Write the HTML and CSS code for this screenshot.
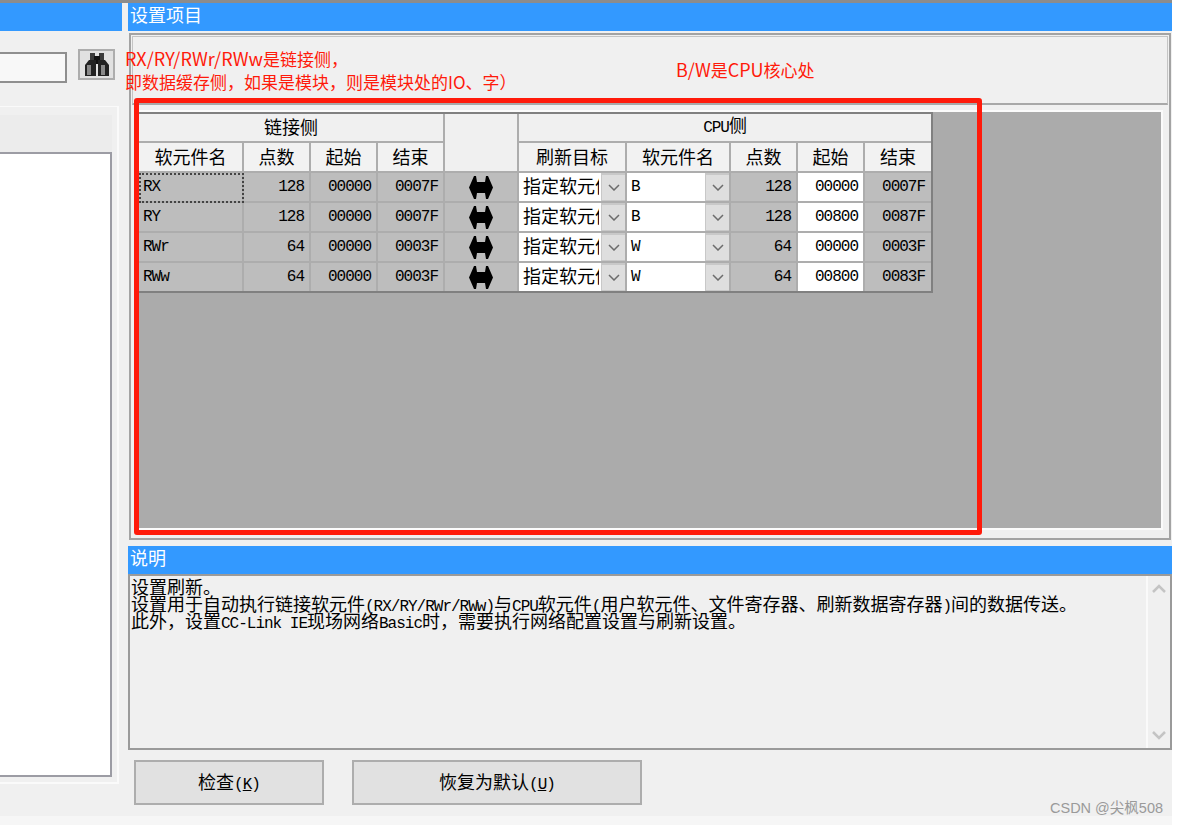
FILE: index.html
```html
<!DOCTYPE html>
<html lang="zh-CN">
<head>
  <meta charset="UTF-8" />
  <title>设置项目</title>
  <link rel="stylesheet" href="styles.css">
</head>
<body>
  <div class="window">
    <div class="main">
      <div class="left">
        <div class="title-bar left-title"></div>
        <div class="search-row">
          <div class="search-input"></div>
          <button class="search-btn" type="button">
            <svg width="26" height="25" viewBox="0 0 26 25">
              <rect x="6" y="1" width="5" height="8" fill="#3a3a3a" />
              <rect x="15" y="1" width="5" height="8" fill="#3a3a3a" />
              <rect x="10" y="4" width="6" height="8" fill="#111" />
              <path d="M5 8h7v16H1V13z" fill="#222" />
              <path d="M14 8h7l4 5v11H14z" fill="#222" />
              <rect x="3" y="13" width="4" height="10" fill="#8a8a8a" />
              <rect x="17" y="13" width="4" height="10" fill="#8a8a8a" />
            </svg>
          </button>
        </div>
        <div class="tree-frame">
          <div class="tree-head"></div>
          <div class="tree-list"></div>
        </div>
      </div>

      <div class="right">
        <div class="title-bar">设置项目</div>
        <div class="settings">
          <div class="settings-top"></div>
          <div class="settings-body">
            <div class="grid-area">
              <table class="grid">
                <colgroup>
                  <col class="c-name"><col class="c-num"><col class="c-num"><col class="c-num">
                  <col class="c-arrow"><col class="c-target"><col class="c-device">
                  <col class="c-num"><col class="c-num"><col class="c-last">
                </colgroup>
                <thead>
                  <tr class="top">
                    <th colspan="4">链接侧</th>
                    <th rowspan="2"></th>
                    <th colspan="5"><span class="lat">CPU</span>侧</th>
                  </tr>
                  <tr class="sub">
                    <th>软元件名</th><th>点数</th><th>起始</th><th>结束</th>
                    <th>刷新目标</th><th>软元件名</th><th>点数</th><th>起始</th><th>结束</th>
                  </tr>
                </thead>
                <tbody>
                  <tr>
                    <td class="lat name focus">RX</td><td class="lat num">128</td><td class="lat num">00000</td><td class="lat num">0007F</td>
                    <td class="arrow"><svg width="24" height="23" viewBox="0 0 24 23"><path d="M0 11.5 5 0H7L8 6H16L17 0H19L24 11.5 19 23H17L16 17H8L7 23H5Z" /></svg></td>
                    <td class="combo-cell"><div class="combo"><span class="combo-text">指定软元件</span><span class="combo-btn"><svg width="12" height="7" viewBox="0 0 12 7"><path d="M1 1 6 6 11 1" /></svg></span></div></td>
                    <td class="combo-cell"><div class="combo"><span class="combo-text lat">B</span><span class="combo-btn"><svg width="12" height="7" viewBox="0 0 12 7"><path d="M1 1 6 6 11 1" /></svg></span></div></td>
                    <td class="lat num">128</td><td class="lat num edit">00000</td><td class="lat num">0007F</td>
                  </tr>
                  <tr>
                    <td class="lat name">RY</td><td class="lat num">128</td><td class="lat num">00000</td><td class="lat num">0007F</td>
                    <td class="arrow"><svg width="24" height="23" viewBox="0 0 24 23"><path d="M0 11.5 5 0H7L8 6H16L17 0H19L24 11.5 19 23H17L16 17H8L7 23H5Z" /></svg></td>
                    <td class="combo-cell"><div class="combo"><span class="combo-text">指定软元件</span><span class="combo-btn"><svg width="12" height="7" viewBox="0 0 12 7"><path d="M1 1 6 6 11 1" /></svg></span></div></td>
                    <td class="combo-cell"><div class="combo"><span class="combo-text lat">B</span><span class="combo-btn"><svg width="12" height="7" viewBox="0 0 12 7"><path d="M1 1 6 6 11 1" /></svg></span></div></td>
                    <td class="lat num">128</td><td class="lat num edit">00800</td><td class="lat num">0087F</td>
                  </tr>
                  <tr>
                    <td class="lat name">RWr</td><td class="lat num">64</td><td class="lat num">00000</td><td class="lat num">0003F</td>
                    <td class="arrow"><svg width="24" height="23" viewBox="0 0 24 23"><path d="M0 11.5 5 0H7L8 6H16L17 0H19L24 11.5 19 23H17L16 17H8L7 23H5Z" /></svg></td>
                    <td class="combo-cell"><div class="combo"><span class="combo-text">指定软元件</span><span class="combo-btn"><svg width="12" height="7" viewBox="0 0 12 7"><path d="M1 1 6 6 11 1" /></svg></span></div></td>
                    <td class="combo-cell"><div class="combo"><span class="combo-text lat">W</span><span class="combo-btn"><svg width="12" height="7" viewBox="0 0 12 7"><path d="M1 1 6 6 11 1" /></svg></span></div></td>
                    <td class="lat num">64</td><td class="lat num edit">00000</td><td class="lat num">0003F</td>
                  </tr>
                  <tr>
                    <td class="lat name">RWw</td><td class="lat num">64</td><td class="lat num">00000</td><td class="lat num">0003F</td>
                    <td class="arrow"><svg width="24" height="23" viewBox="0 0 24 23"><path d="M0 11.5 5 0H7L8 6H16L17 0H19L24 11.5 19 23H17L16 17H8L7 23H5Z" /></svg></td>
                    <td class="combo-cell"><div class="combo"><span class="combo-text">指定软元件</span><span class="combo-btn"><svg width="12" height="7" viewBox="0 0 12 7"><path d="M1 1 6 6 11 1" /></svg></span></div></td>
                    <td class="combo-cell"><div class="combo"><span class="combo-text lat">W</span><span class="combo-btn"><svg width="12" height="7" viewBox="0 0 12 7"><path d="M1 1 6 6 11 1" /></svg></span></div></td>
                    <td class="lat num">64</td><td class="lat num edit">00800</td><td class="lat num">0083F</td>
                  </tr>
                </tbody>
              </table>
            </div>
          </div>
        </div>

        <div class="title-bar desc-title">说明</div>
        <div class="desc">
          <div class="desc-text">
            <p>设置刷新。</p>
            <p>设置用于自动执行链接软元件<span class="lat">(RX/RY/RWr/RWw)</span>与<span class="lat">CPU</span>软元件<span class="lat">(</span>用户软元件、文件寄存器、刷新数据寄存器<span class="lat">)</span>间的数据传送。</p>
            <p>此外，设置<span class="lat">CC-Link IE</span>现场网络<span class="lat">Basic</span>时，需要执行网络配置设置与刷新设置。</p>
          </div>
          <div class="desc-scroll">
            <svg width="14" height="9" viewBox="0 0 14 9"><path d="M1 8 7 2 13 8" /></svg>
            <svg width="14" height="9" viewBox="0 0 14 9"><path d="M1 1 7 7 13 1" /></svg>
          </div>
        </div>

        <div class="actions">
          <button class="btn btn-check" type="button">检查<span class="lat">(<u>K</u>)</span></button>
          <button class="btn btn-reset" type="button">恢复为默认<span class="lat">(<u>U</u>)</span></button>
        </div>
      </div>
    </div>
    <div class="bottom-strip"></div>

    <div class="note-box"></div>
    <div class="note note-link"><span class="note-lat">RX/RY/RWr/RWw</span>是链接侧，<br>即数据缓存侧，如果是模块，则是模块处的IO、字）</div>
    <div class="note note-cpu"><span class="note-lat">B/W</span>是<span class="note-lat">CPU</span>核心处</div>
    <div class="watermark">CSDN @尖枫508</div>
  </div>
</body>
</html>
```

FILE: styles.css
```css
* {
  box-sizing: border-box;
}

body {
  margin: 0;
  background: white;
  font-family: "Noto Sans CJK SC", "Liberation Sans", sans-serif;
  font-size: 18px;
  color: black;
  overflow: hidden;
}

.window {
  position: relative;
  width: 1172px;
  height: 825px;
  background: #f0f0f0;
  border-top: 3px solid #8c8c8c;
  display: flex;
  flex-direction: column;
}

.main {
  display: flex;
  height: 813px;
}

.bottom-strip {
  height: 9px;
  background: #f6f6f6;
}

.lat {
  font-family: "Liberation Mono", monospace;
  font-size: 16px;
  letter-spacing: -1px;
}

.title-bar {
  height: 28px;
  background: #3399ff;
  color: white;
  font-size: 18px;
  line-height: 22px;
  padding-left: 2px;
}

/* left panel */
.left {
  width: 122px;
  display: flex;
  flex-direction: column;
}

.search-row {
  display: flex;
  align-items: flex-start;
  gap: 11px;
  margin-top: 18px;
}

.search-input {
  width: 67px;
  height: 31px;
  margin-top: 3px;
  background: #f8f8f8;
  border: 2px solid #8f8f8f;
  border-left: none;
}

.search-btn {
  width: 37px;
  height: 31px;
  padding: 0;
  background: #e1e1e1;
  border: 2px solid #adadad;
  display: flex;
  align-items: center;
  justify-content: center;
}

.tree-frame {
  width: 119px;
  height: 678px;
  margin-top: 23px;
  padding: 8px 5px 5px 0;
  border: 1px solid #fafafa;
  border-left: none;
  border-bottom-width: 2px;
  border-right-width: 2px;
  display: flex;
  flex-direction: column;
}

.tree-head {
  height: 37px;
  background: #ececec;
}

.tree-list {
  flex: 1;
  background: white;
  border: 2px solid #9c9ca4;
  border-left: none;
}

/* settings */
.right {
  width: 1044px;
  margin-left: 6px;
  display: flex;
  flex-direction: column;
}

.settings {
  height: 507px;
  margin: 2px 1px 0 1px;
  padding: 1px;
  border: 2px solid #a3a3a3;
  display: flex;
  flex-direction: column;
}

.settings-top {
  height: 69px;
  border: 1px solid #c4c4c4;
  border-bottom: 2px solid #a8a8a8;
}

.settings-body {
  flex: 1;
  padding: 7px 7px 6px 4px;
}

.grid-area {
  height: 416px;
  background: #ababab;
  padding: 0 0 0 3px;
  box-shadow: 0 0 0 2px #fbfbfb;
}

.grid {
  border-collapse: separate;
  border-spacing: 0;
  table-layout: fixed;
  width: 794px;
  border-top: 2px solid #808080;
  border-right: 2px solid #808080;
  border-bottom: 2px solid #808080;
  background: #adadad;
}

.c-name { width: 105px; }
.c-num { width: 67px; }
.c-last { width: 66px; }
.c-arrow { width: 74px; }
.c-target { width: 108px; }
.c-device { width: 104px; }

.grid th {
  height: 30px;
  padding: 0 0 3px;
  font-weight: normal;
  font-size: 18px;
  line-height: 20px;
  background: #f0f0f0;
  border-right: 2px solid #adadad;
  border-bottom: 2px solid #adadad;
}

.grid .top th {
  height: 29px;
}

.grid .sub th {
  background: #f2f2f2;
}

.grid td {
  height: 30px;
  padding: 0;
  background: #bdbdbd;
  border-right: 2px solid #adadad;
  border-bottom: 2px solid #adadad;
}

.grid tr > :last-child {
  border-right-width: 0;
}

.grid tbody tr:last-child td {
  height: 28px;
  border-bottom: none;
}

.grid td.name {
  padding-left: 4px;
  text-align: left;
}

.grid td.num {
  padding-right: 5px;
  text-align: right;
}

.grid td.num:last-child {
  padding-right: 6px;
}

.grid td.edit {
  background: white;
}

.grid td.focus {
  outline: 2px dotted #444;
  outline-offset: -2px;
}

.grid td.arrow {
  text-align: center;
  line-height: 0;
}

.grid td.combo-cell {
  background: white;
}

.combo {
  display: flex;
  height: 28px;
  background: #c8c8c8;
  overflow: hidden;
}

.combo-text {
  flex: 1;
  min-width: 0;
  padding-left: 4px;
  line-height: 25px;
  white-space: nowrap;
  overflow: hidden;
  background: white;
  border-right: 2px solid white;
}

.combo-text.lat {
  line-height: 28px;
}

.combo-btn {
  flex: none;
  width: 23px;
  margin: 2px 0 1px 1px;
  background: #dedede;
  display: flex;
  align-items: center;
  justify-content: center;
}

.combo-btn svg path {
  fill: none;
  stroke: #6c6c6c;
  stroke-width: 1.5;
}

/* description */
.desc-title {
  margin-top: 6px;
}

.desc {
  height: 176px;
  border: 2px solid #9a9a9a;
  display: flex;
}

.desc-text {
  flex: 1;
  padding: 2px 0 0 1px;
  line-height: 17px;
}

.desc-text p {
  margin: 0;
}

.desc-text .lat {
  line-height: 0;
}

.desc-scroll {
  width: 24px;
  border-left: 2px solid #fafafa;
  padding: 8px 0;
  display: flex;
  flex-direction: column;
  align-items: center;
  justify-content: space-between;
}

.desc-scroll svg path {
  fill: none;
  stroke: #c4c4c4;
  stroke-width: 2.5;
}

.actions {
  display: flex;
  gap: 28px;
  margin: 10px 0 0 6px;
}

.btn {
  height: 45px;
  padding: 0 0 4px;
  background: #e1e1e1;
  border: 2px solid #adadad;
  font-family: inherit;
  font-size: 18px;
  color: black;
}

.btn-check { width: 190px; }
.btn-reset { width: 290px; }

/* overlays drawn on top of the screenshot */
.note-box {
  position: absolute;
  left: 134px;
  top: 95px;
  width: 848px;
  height: 437px;
  border: 5px solid #ff1a0a;
  border-radius: 3px;
}

.note {
  position: absolute;
  color: #ff1a0a;
  font-size: 17px;
  line-height: 23px;
  white-space: nowrap;
}

.note-lat {
  font-size: 18px;
}

.note-link {
  left: 125px;
  top: 44px;
}

.note-cpu {
  left: 676px;
  top: 55px;
}

.watermark {
  position: absolute;
  left: 1050px;
  top: 796px;
  color: #9a9a9a;
  font-family: "Liberation Sans", "Noto Sans CJK SC", sans-serif;
  font-size: 14.5px;
  line-height: 18px;
  white-space: nowrap;
}
```
